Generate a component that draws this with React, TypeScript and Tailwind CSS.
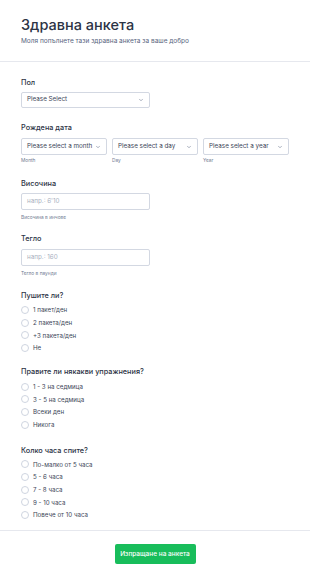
import { ChevronDown } from "lucide-react";

const font = { fontFamily: "Inter, 'Noto Sans', sans-serif" };

function Label({ children, className = "" }: { children: React.ReactNode; className?: string }) {
  return (
    <div className={`text-[7.3px] font-medium leading-[10px] text-[#2c3345] ${className}`}>
      {children}
    </div>
  );
}

function Select({ text, className = "" }: { text: string; className?: string }) {
  return (
    <div
      className={`flex items-center justify-between rounded-[2px] border border-[#d3d8e2] bg-white pl-[5px] pr-[5px] text-[6.3px] text-[#3c4557] ${className}`}
    >
      <span className="whitespace-nowrap">{text}</span>
      <ChevronDown className="size-[6px] shrink-0 text-[#57647e]" strokeWidth={2} />
    </div>
  );
}

function Input({ placeholder }: { placeholder: string }) {
  return (
    <div className="flex h-[17px] w-[129px] items-center rounded-[2px] border border-[#d3d8e2] bg-white pl-[5px] text-[6.3px] text-[#a9b0c0]">
      {placeholder}
    </div>
  );
}

function Hint({ children, className = "" }: { children: React.ReactNode; className?: string }) {
  return <div className={`text-[4.8px] leading-[8px] text-[#6f7a91] ${className}`}>{children}</div>;
}

function Radios({ options }: { options: string[] }) {
  return (
    <div className="flex flex-col">
      {options.map((o) => (
        <div key={o} className="flex h-[12.7px] items-center gap-[4px]">
          <span className="size-[8px] shrink-0 rounded-full border border-[#cfd5e0] bg-white" />
          <span className="text-[6.2px] text-[#3c4557]">{o}</span>
        </div>
      ))}
    </div>
  );
}

export default function App() {
  return (
    <div style={font} className="min-h-[582px] w-[310px] bg-white">
      <div className="border-b border-[#e6e8ee] px-[21px] pt-[16px] pb-[15px]">
        <h1 className="text-[14.5px] font-medium leading-[18px] text-[#2c3345]">Здравна анкета</h1>
        <p className="mt-[2px] text-[6.5px] leading-[10px] text-[#57647e]">
          Моля попълнете тази здравна анкета за ваше добро
        </p>
      </div>

      <div className="px-[21px] pt-[16px]">
        <Label>Пол</Label>
        <Select text="Please Select" className="mt-[4px] h-[16px] w-[129px]" />

        <Label className="mt-[15px]">Рождена дата</Label>
        <div className="mt-[5px] grid grid-cols-3 gap-[5px]">
          <div>
            <Select text="Please select a month" className="h-[17px]" />
            <Hint className="mt-[1px]">Month</Hint>
          </div>
          <div>
            <Select text="Please select a day" className="h-[17px]" />
            <Hint className="mt-[1px]">Day</Hint>
          </div>
          <div>
            <Select text="Please select a year" className="h-[17px]" />
            <Hint className="mt-[1px]">Year</Hint>
          </div>
        </div>

        <Label className="mt-[15px]">Височина</Label>
        <div className="mt-[4px]">
          <Input placeholder="напр.: 6'10" />
        </div>
        <Hint className="mt-[3px]">Височина в инчове</Hint>

        <Label className="mt-[13px]">Тегло</Label>
        <div className="mt-[5px]">
          <Input placeholder="напр.: 160" />
        </div>
        <Hint className="mt-[3px]">Тегло в паунди</Hint>

        <Label className="mt-[14px]">Пушите ли?</Label>
        <div className="mt-[2.5px]">
          <Radios options={["1 пакет/ден", "2 пакета/ден", "+3 пакета/ден", "Не"]} />
        </div>

        <Label className="mt-[12.5px]">Правите ли някакви упражнения?</Label>
        <div className="mt-[3.5px]">
          <Radios options={["1 - 3 на седмица", "3 - 5 на седмица", "Всеки ден", "Никога"]} />
        </div>

        <Label className="mt-[14.5px]">Колко часа спите?</Label>
        <div className="mt-[2.5px]">
          <Radios
            options={["По-малко от 5 часа", "5 - 6 часа", "7 - 8 часа", "9 - 10 часа", "Повече от 10 часа"]}
          />
        </div>
      </div>

      <div className="mt-[9px] border-t border-[#e6e8ee] pt-[13px] pb-[16px]">
        <div className="flex justify-center">
          <button className="h-[20px] w-[81px] rounded-[2px] bg-[#18bd5b] text-[6.5px] font-medium text-white">
            Изпращане на анкета
          </button>
        </div>
      </div>
    </div>
  );
}
